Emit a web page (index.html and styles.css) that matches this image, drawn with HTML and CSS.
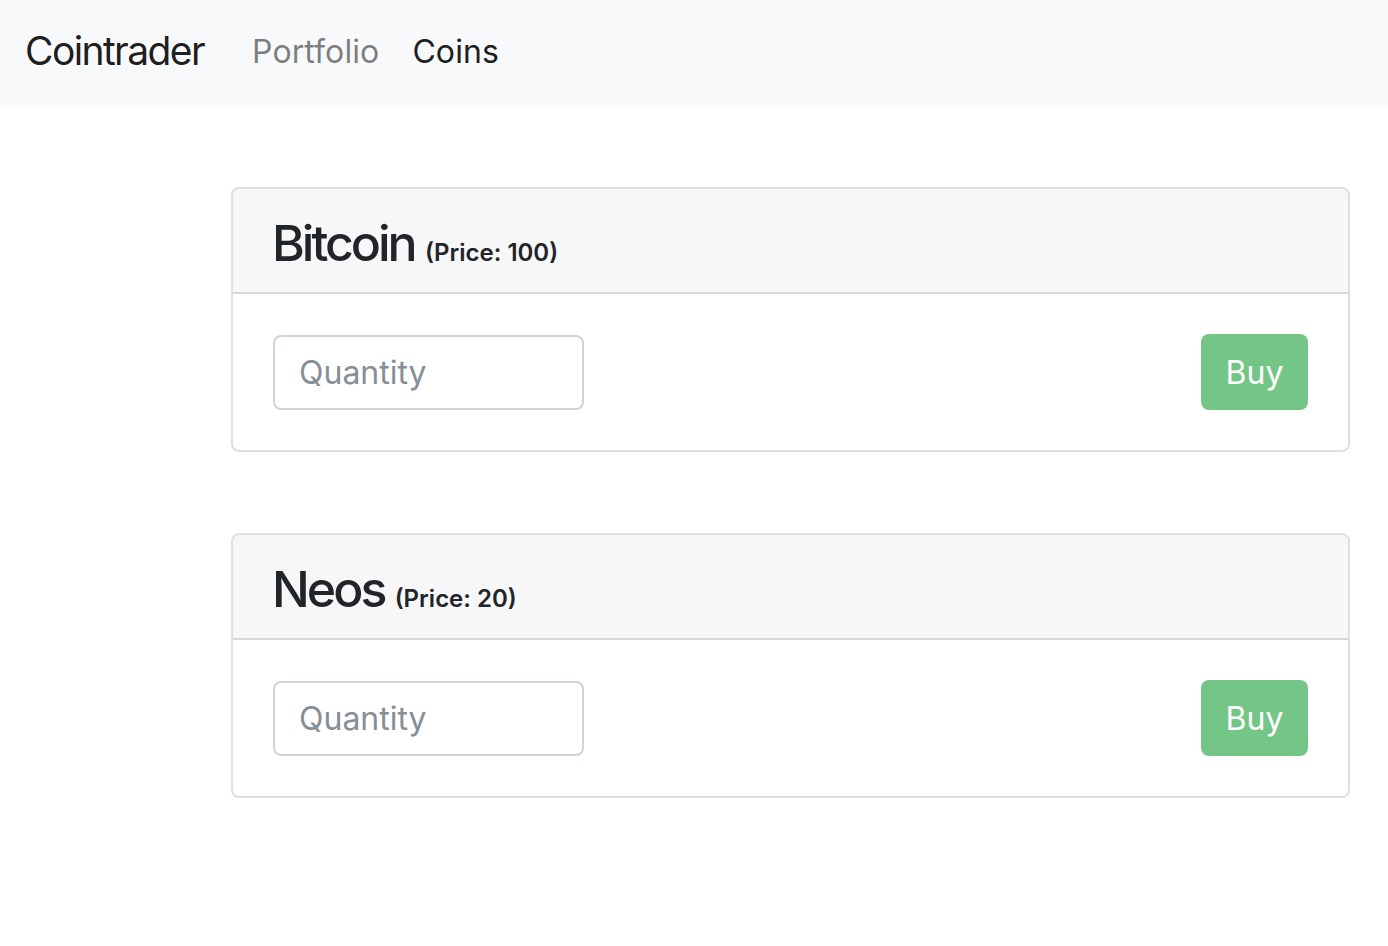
FILE: index.html
```html
<!DOCTYPE html>
<html>
<head>
<meta charset="utf-8">
<link rel="stylesheet" href="styles.css">
</head>
<body>
<nav class="navbar">
  <a class="brand">Cointrader</a>
  <div class="nav-links">
    <a class="nav-link muted">Portfolio</a>
    <a class="nav-link active">Coins</a>
  </div>
</nav>
<main class="content">
  <section class="card">
    <header class="card-header">
      <h3 class="coin-name">Bitcoin <small class="price">(Price: 100)</small></h3>
    </header>
    <div class="card-body">
      <input class="qty" type="text" placeholder="Quantity">
      <button class="buy" disabled>Buy</button>
    </div>
  </section>
  <section class="card">
    <header class="card-header">
      <h3 class="coin-name">Neos <small class="price">(Price: 20)</small></h3>
    </header>
    <div class="card-body">
      <input class="qty" type="text" placeholder="Quantity">
      <button class="buy" disabled>Buy</button>
    </div>
  </section>
</main>
</body>
</html>
```

FILE: styles.css
```css
* { box-sizing: border-box; }
html, body { margin: 0; padding: 0; }
body {
  font-family: Inter, "Noto Sans", "Liberation Sans", sans-serif;
  color: #212529;
  background: #fff;
}
.navbar {
  height: 105px;
  background: #f8f9fa;
  display: flex;
  align-items: center;
  padding: 0 0 0 25px;
}
.brand {
  font-size: 39px;
  color: rgba(0,0,0,.9);
  letter-spacing: -1.6px;
  margin-right: 48px;
  padding-bottom: 4px;
}
.nav-links { display: flex; gap: 33px; }
.nav-link {
  font-size: 32px;
  letter-spacing: 0.1px;
  padding-bottom: 2px;
}
.nav-link.muted { color: rgba(0,0,0,.5); }
.nav-link.active { color: rgba(0,0,0,.9); }

.content {
  padding: 82px 38px 0 231px;
  display: flex;
  flex-direction: column;
  gap: 81px;
}
.card {
  border: 2px solid rgba(0,0,0,.125);
  border-radius: 8px;
  overflow: hidden;
}
.card-header {
  background: rgba(0,0,0,.03);
  border-bottom: 2px solid rgba(0,0,0,.125);
  height: 105px;
  padding: 0 38px 0 39px;
  display: flex;
  align-items: center;
}
.coin-name {
  margin: 0;
  font-size: 50px;
  font-weight: 500;
  letter-spacing: -3px;
  line-height: 1;
  padding-top: 4px;
}
.price {
  font-size: 24px;
  font-weight: 600;
  letter-spacing: 0;
  margin-left: 0;
}
.card-body {
  padding: 40px;
  display: flex;
  justify-content: space-between;
  align-items: center;
}
.qty {
  width: 311px;
  height: 75px;
  border: 2px solid #ced4da;
  border-radius: 8px;
  padding: 0 24px;
  font-family: inherit;
  font-size: 32px;
  color: #495057;
  background: #fff;
}
.qty::placeholder { color: #868e96; opacity: 1; }
.buy {
  width: 107px;
  height: 76px;
  border: none;
  border-radius: 8px;
  background: #74c687;
  color: #fff;
  font-family: inherit;
  font-size: 32px;
  padding: 0;
  opacity: 1;
}
```
